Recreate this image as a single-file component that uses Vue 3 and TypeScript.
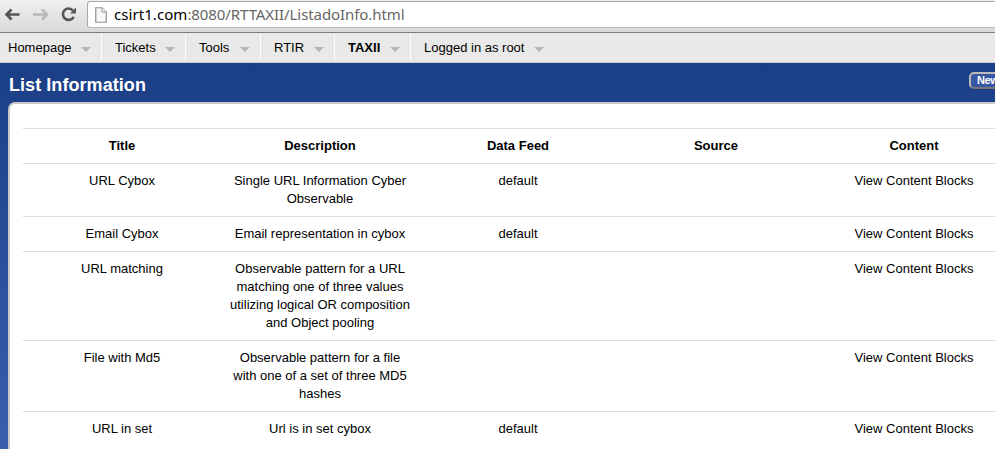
<script setup lang="ts">
interface MenuItem { label: string; key: string; current?: boolean }
interface Row { title: string; lines: string[]; feed: string; source: string }

const menu: MenuItem[] = [
  { label: 'Homepage', key: 'home' },
  { label: 'Tickets', key: 'tickets' },
  { label: 'Tools', key: 'tools' },
  { label: 'RTIR', key: 'rtir' },
  { label: 'TAXII', key: 'taxii', current: true },
  { label: 'Logged in as root', key: 'user' },
]
const columns: string[] = ['Title', 'Description', 'Data Feed', 'Source', 'Content']
const rows: Row[] = [
  { title: 'URL Cybox', lines: ['Single URL Information Cyber', 'Observable'], feed: 'default', source: '' },
  { title: 'Email Cybox', lines: ['Email representation in cybox'], feed: 'default', source: '' },
  { title: 'URL matching', lines: ['Observable pattern for a URL', 'matching one of three values', 'utilizing logical OR composition', 'and Object pooling'], feed: '', source: '' },
  { title: 'File with Md5', lines: ['Observable pattern for a file', 'with one of a set of three MD5', 'hashes'], feed: '', source: '' },
  { title: 'URL in set', lines: ['Url is in set cybox'], feed: 'default', source: '' },
]
</script>

<template>
  <div class="window">
    <header class="toolbar">
      <svg class="nav" width="86" height="31" viewBox="0 0 86 31" fill="none">
        <path d="M19.500 14.500H7M11.500 9.500L6.500 14.500L11.500 19.500" stroke="#555" stroke-width="2.600" />
        <path d="M33 14.500H46M42 9.500L47 14.500L42 19.500" stroke="#b9b9b9" stroke-width="2.600" />
        <path d="M73 10.500A5.700 5.700 0 1 0 73.700 16.800" stroke="#555" stroke-width="2.600" />
        <path d="M76 7.500V13.500H70Z" fill="#555" />
      </svg>
      <div class="address">
        <svg class="page" width="12" height="16" viewBox="0 0 12 16">
          <path d="M.75.75H7L11.250 5V15.250H.75Z" fill="#f7f7f7" stroke="#929292" stroke-width="1.200" />
          <path d="M7 .75V5H11.250" fill="#fff" stroke="#929292" />
        </svg>
        <span class="url"><b>csirt1.com</b>:8080/RTTAXII/ListadoInfo.html</span>
      </div>
    </header>
    <nav class="menu">
      <a v-for="m in menu" :key="m.key" :class="['item', m.key, { current: m.current }]">
        {{ m.label }}<i class="arrow"></i>
      </a>
    </nav>
    <main class="body">
      <div class="heading">
        <h1>List Information</h1>
        <button class="new">New</button>
      </div>
      <section class="panel">
        <table>
          <thead>
            <tr><th v-for="c in columns" :key="c">{{ c }}</th></tr>
          </thead>
          <tbody>
            <tr v-for="r in rows" :key="r.title">
              <td>{{ r.title }}</td>
              <td><div v-for="l in r.lines" :key="l">{{ l }}</div></td>
              <td>{{ r.feed }}</td>
              <td>{{ r.source }}</td>
              <td>View Content Blocks</td>
            </tr>
          </tbody>
        </table>
      </section>
    </main>
  </div>
</template>

<style>
body { overflow: hidden; }
</style>

<style scoped>
.window {
  width: 995px;
  height: 449px;
  overflow: hidden;
  display: flex;
  flex-direction: column;
  font: 13px/18px "Liberation Sans", Arial, sans-serif;
  color: #000;
}
.toolbar {
  box-sizing: border-box;
  height: 33px;
  flex: none;
  display: flex;
  background: linear-gradient(#f0f0f0, #d9d9d9);
  border-bottom: 1px solid #7d7d7d;
}
.nav { flex: none; }
.address {
  box-sizing: border-box;
  width: 930px;
  flex: none;
  height: 27px;
  margin: 1px 0 0 1px;
  padding-left: 7px;
  display: flex;
  align-items: center;
  background: #fff;
  border: 1px solid #aaa;
  border-bottom-color: #bcbcbc;
  border-radius: 3px;
}
.page { flex: none; }
.url {
  margin-left: 7px;
  padding-bottom: 2px;
  font: 15px/22px "Noto Sans", sans-serif;
  letter-spacing: -0.08px;
  color: #666;
  white-space: nowrap;
}
.url b { font-weight: 400; letter-spacing: 0.06px; color: #000; }
.menu {
  box-sizing: border-box;
  height: 30px;
  flex: none;
  display: flex;
  align-items: flex-start;
  padding-top: 1px;
  background: #e9e9e9;
  border-bottom: 1px solid #ccc;
}
.item {
  box-sizing: border-box;
  flex: none;
  height: 26px;
  padding: 5px 10px 0 13px;
  display: flex;
  justify-content: space-between;
  border-right: 1px solid #fff;
  white-space: nowrap;
}
.arrow {
  margin-top: 8px;
  width: 0;
  height: 0;
  border: 5px solid transparent;
  border-top-color: #b5b5b5;
  border-bottom: 0;
}
.home { width: 102px; padding-left: 8px; }
.tickets { width: 84px; }
.tools { width: 75px; }
.rtir { width: 74px; }
.taxii { width: 76px; }
.user { width: 143px; border-right: 0; }
.current { font-weight: bold; }
.body {
  flex: 1;
  min-height: 0;
  display: flex;
  flex-direction: column;
  padding-left: 8px;
  background: linear-gradient(#1b3f86, #395fae);
}
.heading {
  flex: none;
  height: 39px;
  display: flex;
  justify-content: space-between;
}
h1 {
  margin: 10px 0 0 1px;
  font-size: 18px;
  line-height: 24px;
  letter-spacing: 0.06px;
  color: #fff;
}
.new {
  box-sizing: border-box;
  width: 100px;
  height: 17px;
  flex: none;
  margin: 9px -74px 0 0;
  padding: 0 0 0 6px;
  text-align: left;
  white-space: nowrap;
  font: bold 11px/13px "Liberation Sans", Arial, sans-serif;
  letter-spacing: -0.4px;
  color: #fff;
  background: #3858a5;
  border: 2px solid #bbb;
  border-bottom-color: #777;
  border-radius: 5px;
}
.panel {
  box-sizing: border-box;
  width: 1021px;
  flex: 1;
  padding: 24px 13px 0;
  background: #fff;
  border: 2px solid #c9c9cc;
  border-bottom: 0;
  border-radius: 7px 7px 0 0;
}
table {
  width: 990px;
  table-layout: fixed;
  border-collapse: separate;
  border-spacing: 0;
}
th, td {
  padding: 8px 0;
  border-top: 1px solid #dcdcdc;
  text-align: center;
  vertical-align: top;
  white-space: nowrap;
}
</style>
